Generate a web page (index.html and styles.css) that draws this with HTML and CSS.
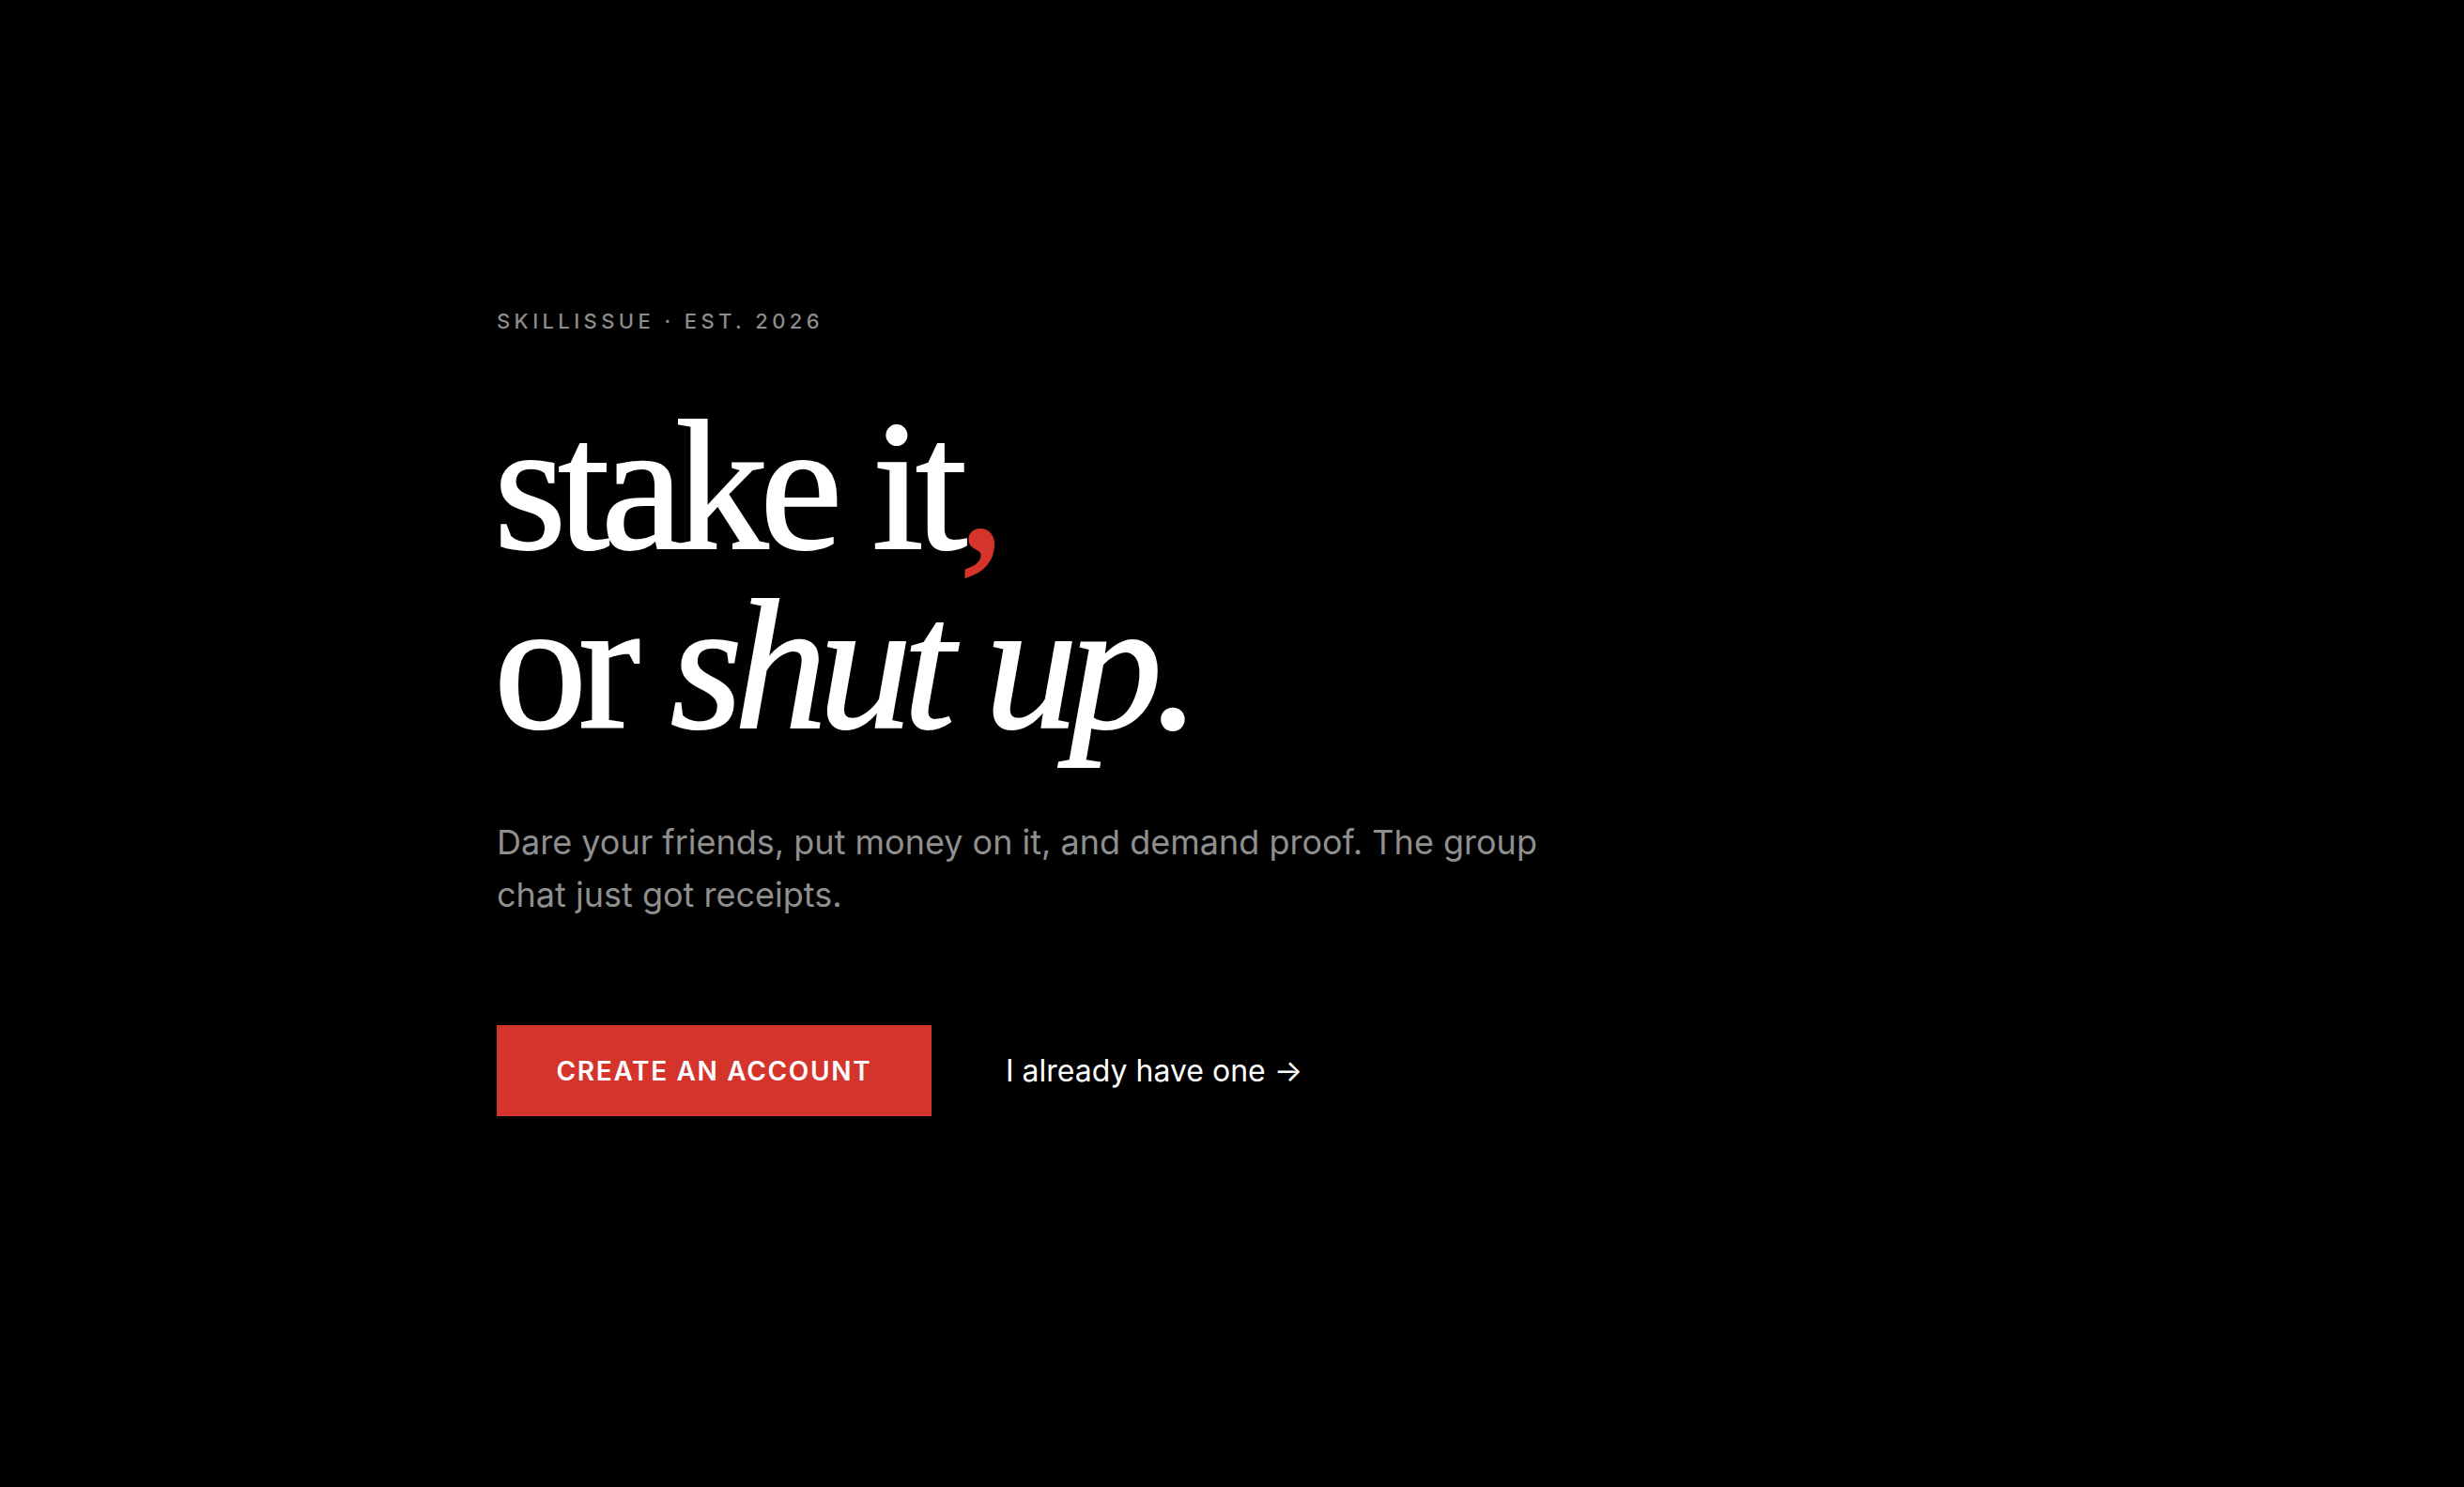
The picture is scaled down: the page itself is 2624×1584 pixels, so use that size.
FILE: index.html
```html
<!DOCTYPE html>
<html lang="en">
<head>
<meta charset="utf-8">
<title>SkillIssue</title>
<link rel="stylesheet" href="styles.css">
</head>
<body>
<main class="hero">
  <p class="eyebrow">SKILLISSUE · EST. 2026</p>
  <h1 class="title">
    <span class="line">stake it<span class="comma">,</span></span>
    <span class="line">or <em>shut up.</em></span>
  </h1>
  <p class="lede">Dare your friends, put money on it, and demand proof. The group chat just got receipts.</p>
  <div class="actions">
    <a class="btn" href="#">CREATE AN ACCOUNT</a>
    <a class="link" href="#">I already have one →</a>
  </div>
</main>
</body>
</html>
```
FILE: styles.css
```css
html, body {
  margin: 0;
  padding: 0;
  background: #000;
  height: 100%;
}
body {
  font-family: Inter, "Noto Sans", sans-serif;
  color: #fff;
}
.hero {
  padding: 327px 0 0 529px;
  display: flex;
  flex-direction: column;
  align-items: flex-start;
}
.eyebrow {
  margin: 0;
  font-size: 22px;
  line-height: 30px;
  font-weight: 500;
  letter-spacing: 0.2em;
  color: #8c8c8c;
}
.title {
  margin: 65px 0 0 -3px;
  font-family: "Liberation Serif", serif;
  font-weight: 400;
  font-size: 198px;
  line-height: 191px;
  letter-spacing: -0.045em;
  -webkit-text-stroke: 2px #fff;
}
.line {
  display: block;
}
.title em {
  font-style: italic;
}
.comma {
  color: #d6342b;
  -webkit-text-stroke: 2px #d6342b;
}
.lede {
  margin: 65px 0 0;
  max-width: 1150px;
  font-size: 36px;
  line-height: 56px;
  color: #8f8f8f;
}
.actions {
  margin-top: 111px;
  display: flex;
  align-items: center;
  gap: 79px;
}
.btn {
  display: flex;
  align-items: center;
  justify-content: center;
  width: 463px;
  height: 97px;
  background: #d4342c;
  color: #fff;
  text-decoration: none;
  font-size: 28px;
  font-weight: 600;
  letter-spacing: 0.06em;
}
.link {
  color: #fff;
  text-decoration: none;
  font-size: 32px;
}
```
